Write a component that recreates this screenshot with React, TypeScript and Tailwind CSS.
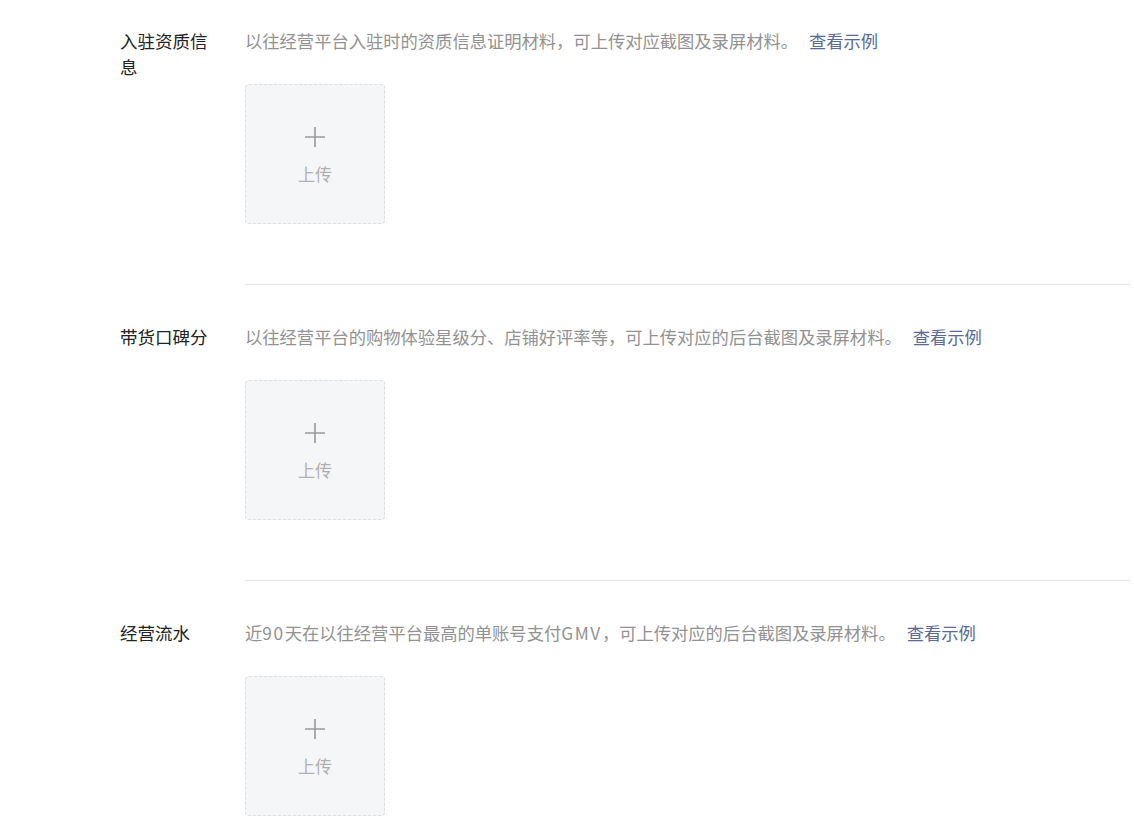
import type { ReactNode } from "react";

const Latin = ({ children }: { children: ReactNode }) => (
  <span className="tracking-[1.6px]">{children}</span>
);

const sections: { label: string; desc: ReactNode }[] = [
  {
    label: "入驻资质信息",
    desc: "以往经营平台入驻时的资质信息证明材料，可上传对应截图及录屏材料。",
  },
  {
    label: "带货口碑分",
    desc: "以往经营平台的购物体验星级分、店铺好评率等，可上传对应的后台截图及录屏材料。",
  },
  {
    label: "经营流水",
    desc: (
      <>
        近<Latin>90</Latin>天在以往经营平台最高的单账号支付<Latin>GMV</Latin>
        ，可上传对应的后台截图及录屏材料。
      </>
    ),
  },
];

function UploadBox() {
  return (
    <button className="mt-[30px] flex h-[140px] w-[140px] flex-col items-center justify-center rounded-[4px] border border-dashed border-[#dcdee2] bg-[#f5f6f7] pt-[4px]">
      <svg width="24" height="24" viewBox="0 0 24 24" className="text-[#9a9a9a]">
        <path d="M12 2v20M2 12h20" stroke="currentColor" strokeWidth="1.6" />
      </svg>
      <span className="mt-[12px] text-[17px] leading-[26px] text-[#b0b0b0]">上传</span>
    </button>
  );
}

export default function App() {
  return (
    <div
      className="min-h-screen bg-white pt-[28px] pl-[120px] pr-[4px]"
      style={{ fontFamily: '"Microsoft YaHei", "Noto Sans CJK SC", sans-serif' }}
    >
      {sections.map((s, i) => (
        <div key={s.label}>
          {i > 0 && <div className="ml-[125px] mt-[60px] mb-[39px] h-px bg-[#e5e5e5]" />}
          <div className="flex">
            <div className="w-[100px] shrink-0 pr-[6px] text-[17.5px] leading-[26px] text-[#222]">
              {s.label}
            </div>
            <div className="ml-[25px] flex-1">
              <p className="text-[17.3px] leading-[26px] text-[#929292]">
                {s.desc}
                <a className="ml-[11px] cursor-pointer text-[#5a6a96]">查看示例</a>
              </p>
              <UploadBox />
            </div>
          </div>
        </div>
      ))}
    </div>
  );
}
